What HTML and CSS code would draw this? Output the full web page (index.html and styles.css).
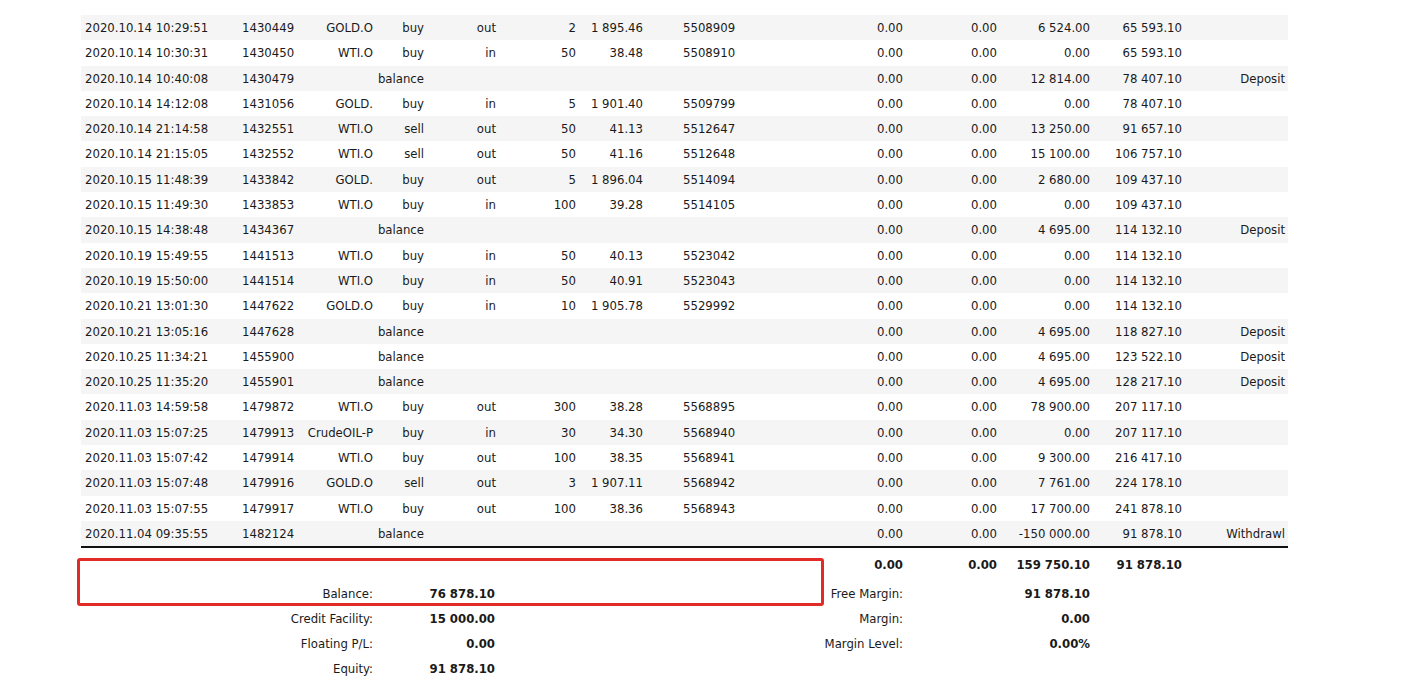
FILE: index.html
```html
<!DOCTYPE html>
<html>
<head>
<meta charset="utf-8">
<link rel="stylesheet" href="styles.css">
</head>
<body>
<div class="page">
  <div class="deals">
    <div class="row"><span class="c1">2020.10.14 10:29:51</span><span class="c2">1430449</span><span class="c3">GOLD.O</span><span class="c4">buy</span><span class="c5">out</span><span class="c6">2</span><span class="c7">1 895.46</span><span class="c8">5508909</span><span class="c9">0.00</span><span class="c10">0.00</span><span class="c11">6 524.00</span><span class="c12">65 593.10</span><span class="c13"></span></div>
    <div class="row"><span class="c1">2020.10.14 10:30:31</span><span class="c2">1430450</span><span class="c3">WTI.O</span><span class="c4">buy</span><span class="c5">in</span><span class="c6">50</span><span class="c7">38.48</span><span class="c8">5508910</span><span class="c9">0.00</span><span class="c10">0.00</span><span class="c11">0.00</span><span class="c12">65 593.10</span><span class="c13"></span></div>
    <div class="row"><span class="c1">2020.10.14 10:40:08</span><span class="c2">1430479</span><span class="c3"></span><span class="c4">balance</span><span class="c5"></span><span class="c6"></span><span class="c7"></span><span class="c8"></span><span class="c9">0.00</span><span class="c10">0.00</span><span class="c11">12 814.00</span><span class="c12">78 407.10</span><span class="c13">Deposit</span></div>
    <div class="row"><span class="c1">2020.10.14 14:12:08</span><span class="c2">1431056</span><span class="c3">GOLD.</span><span class="c4">buy</span><span class="c5">in</span><span class="c6">5</span><span class="c7">1 901.40</span><span class="c8">5509799</span><span class="c9">0.00</span><span class="c10">0.00</span><span class="c11">0.00</span><span class="c12">78 407.10</span><span class="c13"></span></div>
    <div class="row"><span class="c1">2020.10.14 21:14:58</span><span class="c2">1432551</span><span class="c3">WTI.O</span><span class="c4">sell</span><span class="c5">out</span><span class="c6">50</span><span class="c7">41.13</span><span class="c8">5512647</span><span class="c9">0.00</span><span class="c10">0.00</span><span class="c11">13 250.00</span><span class="c12">91 657.10</span><span class="c13"></span></div>
    <div class="row"><span class="c1">2020.10.14 21:15:05</span><span class="c2">1432552</span><span class="c3">WTI.O</span><span class="c4">sell</span><span class="c5">out</span><span class="c6">50</span><span class="c7">41.16</span><span class="c8">5512648</span><span class="c9">0.00</span><span class="c10">0.00</span><span class="c11">15 100.00</span><span class="c12">106 757.10</span><span class="c13"></span></div>
    <div class="row"><span class="c1">2020.10.15 11:48:39</span><span class="c2">1433842</span><span class="c3">GOLD.</span><span class="c4">buy</span><span class="c5">out</span><span class="c6">5</span><span class="c7">1 896.04</span><span class="c8">5514094</span><span class="c9">0.00</span><span class="c10">0.00</span><span class="c11">2 680.00</span><span class="c12">109 437.10</span><span class="c13"></span></div>
    <div class="row"><span class="c1">2020.10.15 11:49:30</span><span class="c2">1433853</span><span class="c3">WTI.O</span><span class="c4">buy</span><span class="c5">in</span><span class="c6">100</span><span class="c7">39.28</span><span class="c8">5514105</span><span class="c9">0.00</span><span class="c10">0.00</span><span class="c11">0.00</span><span class="c12">109 437.10</span><span class="c13"></span></div>
    <div class="row"><span class="c1">2020.10.15 14:38:48</span><span class="c2">1434367</span><span class="c3"></span><span class="c4">balance</span><span class="c5"></span><span class="c6"></span><span class="c7"></span><span class="c8"></span><span class="c9">0.00</span><span class="c10">0.00</span><span class="c11">4 695.00</span><span class="c12">114 132.10</span><span class="c13">Deposit</span></div>
    <div class="row"><span class="c1">2020.10.19 15:49:55</span><span class="c2">1441513</span><span class="c3">WTI.O</span><span class="c4">buy</span><span class="c5">in</span><span class="c6">50</span><span class="c7">40.13</span><span class="c8">5523042</span><span class="c9">0.00</span><span class="c10">0.00</span><span class="c11">0.00</span><span class="c12">114 132.10</span><span class="c13"></span></div>
    <div class="row"><span class="c1">2020.10.19 15:50:00</span><span class="c2">1441514</span><span class="c3">WTI.O</span><span class="c4">buy</span><span class="c5">in</span><span class="c6">50</span><span class="c7">40.91</span><span class="c8">5523043</span><span class="c9">0.00</span><span class="c10">0.00</span><span class="c11">0.00</span><span class="c12">114 132.10</span><span class="c13"></span></div>
    <div class="row"><span class="c1">2020.10.21 13:01:30</span><span class="c2">1447622</span><span class="c3">GOLD.O</span><span class="c4">buy</span><span class="c5">in</span><span class="c6">10</span><span class="c7">1 905.78</span><span class="c8">5529992</span><span class="c9">0.00</span><span class="c10">0.00</span><span class="c11">0.00</span><span class="c12">114 132.10</span><span class="c13"></span></div>
    <div class="row"><span class="c1">2020.10.21 13:05:16</span><span class="c2">1447628</span><span class="c3"></span><span class="c4">balance</span><span class="c5"></span><span class="c6"></span><span class="c7"></span><span class="c8"></span><span class="c9">0.00</span><span class="c10">0.00</span><span class="c11">4 695.00</span><span class="c12">118 827.10</span><span class="c13">Deposit</span></div>
    <div class="row"><span class="c1">2020.10.25 11:34:21</span><span class="c2">1455900</span><span class="c3"></span><span class="c4">balance</span><span class="c5"></span><span class="c6"></span><span class="c7"></span><span class="c8"></span><span class="c9">0.00</span><span class="c10">0.00</span><span class="c11">4 695.00</span><span class="c12">123 522.10</span><span class="c13">Deposit</span></div>
    <div class="row"><span class="c1">2020.10.25 11:35:20</span><span class="c2">1455901</span><span class="c3"></span><span class="c4">balance</span><span class="c5"></span><span class="c6"></span><span class="c7"></span><span class="c8"></span><span class="c9">0.00</span><span class="c10">0.00</span><span class="c11">4 695.00</span><span class="c12">128 217.10</span><span class="c13">Deposit</span></div>
    <div class="row"><span class="c1">2020.11.03 14:59:58</span><span class="c2">1479872</span><span class="c3">WTI.O</span><span class="c4">buy</span><span class="c5">out</span><span class="c6">300</span><span class="c7">38.28</span><span class="c8">5568895</span><span class="c9">0.00</span><span class="c10">0.00</span><span class="c11">78 900.00</span><span class="c12">207 117.10</span><span class="c13"></span></div>
    <div class="row"><span class="c1">2020.11.03 15:07:25</span><span class="c2">1479913</span><span class="c3">CrudeOIL-P</span><span class="c4">buy</span><span class="c5">in</span><span class="c6">30</span><span class="c7">34.30</span><span class="c8">5568940</span><span class="c9">0.00</span><span class="c10">0.00</span><span class="c11">0.00</span><span class="c12">207 117.10</span><span class="c13"></span></div>
    <div class="row"><span class="c1">2020.11.03 15:07:42</span><span class="c2">1479914</span><span class="c3">WTI.O</span><span class="c4">buy</span><span class="c5">out</span><span class="c6">100</span><span class="c7">38.35</span><span class="c8">5568941</span><span class="c9">0.00</span><span class="c10">0.00</span><span class="c11">9 300.00</span><span class="c12">216 417.10</span><span class="c13"></span></div>
    <div class="row"><span class="c1">2020.11.03 15:07:48</span><span class="c2">1479916</span><span class="c3">GOLD.O</span><span class="c4">sell</span><span class="c5">out</span><span class="c6">3</span><span class="c7">1 907.11</span><span class="c8">5568942</span><span class="c9">0.00</span><span class="c10">0.00</span><span class="c11">7 761.00</span><span class="c12">224 178.10</span><span class="c13"></span></div>
    <div class="row"><span class="c1">2020.11.03 15:07:55</span><span class="c2">1479917</span><span class="c3">WTI.O</span><span class="c4">buy</span><span class="c5">out</span><span class="c6">100</span><span class="c7">38.36</span><span class="c8">5568943</span><span class="c9">0.00</span><span class="c10">0.00</span><span class="c11">17 700.00</span><span class="c12">241 878.10</span><span class="c13"></span></div>
    <div class="row"><span class="c1">2020.11.04 09:35:55</span><span class="c2">1482124</span><span class="c3"></span><span class="c4">balance</span><span class="c5"></span><span class="c6"></span><span class="c7"></span><span class="c8"></span><span class="c9">0.00</span><span class="c10">0.00</span><span class="c11">-150 000.00</span><span class="c12">91 878.10</span><span class="c13">Withdrawl</span></div>
  </div>

  <div class="totals">
    <span class="t-space"></span><span class="c9 b">0.00</span><span class="c10 b">0.00</span><span class="c11 b">159 750.10</span><span class="c12 b">91 878.10</span><span class="c13"></span>
  </div>

  <div class="summary">
    <div class="srow"><span class="lbl-l">Balance:</span><span class="val-l">76 878.10</span><span class="lbl-r">Free Margin:</span><span class="val-r">91 878.10</span></div>
    <div class="srow"><span class="lbl-l">Credit Facility:</span><span class="val-l">15 000.00</span><span class="lbl-r">Margin:</span><span class="val-r">0.00</span></div>
    <div class="srow"><span class="lbl-l">Floating P/L:</span><span class="val-l">0.00</span><span class="lbl-r">Margin Level:</span><span class="val-r">0.00%</span></div>
    <div class="srow"><span class="lbl-l">Equity:</span><span class="val-l">91 878.10</span><span class="lbl-r"></span><span class="val-r"></span></div>
  </div>

  <div class="highlight"></div>
</div>
</body>
</html>
```

FILE: styles.css
```css
html, body {
  margin: 0;
  padding: 0;
  background: #ffffff;
}

.page {
  position: relative;
  width: 1411px;
  height: 685px;
  padding: 15px 0 0 81px;
  box-sizing: border-box;
  font-family: "DejaVu Sans Condensed", "DejaVu Sans", sans-serif;
  font-stretch: condensed;
  font-size: 13px;
  color: #1a1a1a;
}

.deals,
.totals,
.srow {
  width: 1207px;
}

.row,
.totals,
.srow {
  display: grid;
  grid-template-columns: 157px 62px 77px 51px 72px 80px 99px 81px 147px 94px 93px 92px 102px;
}

.row {
  height: 25.3px;
  line-height: 25.3px;
  white-space: nowrap;
}

.row:nth-child(odd) {
  background: #f5f5f5;
}

.deals {
  border-bottom: 2px solid #111;
}

.row span,
.totals span,
.srow span {
  padding: 0 4px;
  white-space: nowrap;
}

.c1, .c2, .c8 { text-align: left; }
.c3, .c4, .c5, .c6, .c7, .c9, .c10, .c11, .c12, .c13 { text-align: right; }
.c4 { padding-left: 0 !important; overflow: visible; direction: rtl; }
.c7 { padding-right: 36px !important; }
.c13 { padding-right: 3px !important; }

.totals {
  height: 33px;
  line-height: 33px;
}

.t-space { grid-column: 1 / 9; }
.b { font-weight: bold; }

.srow {
  height: 25px;
  line-height: 25px;
}

.lbl-l { grid-column: 1 / 4; text-align: right; }
.val-l { grid-column: 4 / 6; text-align: right; font-weight: bold; padding-right: 5px !important; }
.lbl-r { grid-column: 6 / 10; text-align: right; }
.val-r { grid-column: 10 / 12; text-align: right; font-weight: bold; }

.highlight {
  position: absolute;
  left: 77px;
  top: 558px;
  width: 747px;
  height: 48px;
  box-sizing: border-box;
  border: 3px solid #e22a27;
  border-radius: 3px;
}
```
